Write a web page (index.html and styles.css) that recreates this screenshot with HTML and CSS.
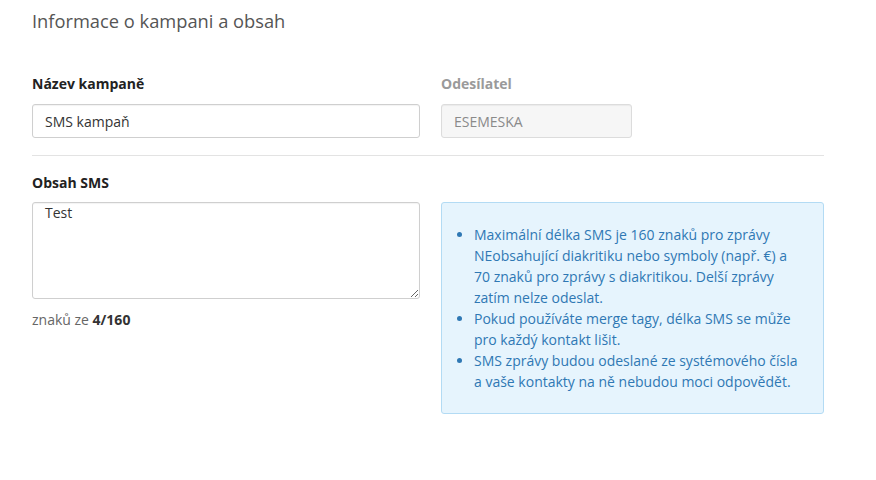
FILE: index.html
```html
<!DOCTYPE html>
<html lang="cs">
<head>
<meta charset="utf-8">
<title>Informace o kampani a obsah</title>
<link rel="stylesheet" href="styles.css">
</head>
<body>
<div class="page">
  <h2 class="title">Informace o kampani a obsah</h2>
  <div class="row">
    <div class="field">
      <label class="label" for="name">Název kampaně</label>
      <input id="name" class="input" type="text" value="SMS kampaň">
    </div>
    <div class="field">
      <label class="label label-muted" for="sender">Odesílatel</label>
      <input id="sender" class="input input-disabled" type="text" value="ESEMESKA" readonly>
    </div>
  </div>
  <hr class="divider">
  <div class="row">
    <div class="field">
      <label class="label label-sms" for="content">Obsah SMS</label>
      <textarea id="content" class="textarea">Test</textarea>
      <div class="counter">znaků ze <strong>4/160</strong></div>
    </div>
    <div class="info">
      <ul class="info-list">
        <li>Maximální délka SMS je 160 znaků pro zprávy NEobsahující diakritiku nebo symboly (např. €) a 70 znaků pro zprávy s diakritikou. Delší zprávy zatím nelze odeslat.</li>
        <li>Pokud používáte merge tagy, délka SMS se může pro každý kontakt lišit.</li>
        <li>SMS zprávy budou odeslané ze systémového čísla a vaše kontakty na ně nebudou moci odpovědět.</li>
      </ul>
    </div>
  </div>
</div>
</body>
</html>
```

FILE: styles.css
```css
* { box-sizing: border-box; }

html, body {
  margin: 0;
  padding: 0;
  background: #fff;
}

body {
  font-family: "Open Sans", "Liberation Sans", sans-serif;
  font-size: 14px;
  line-height: 18px;
  color: #333;
}

.page {
  width: 792px;
  margin-left: 32px;
  padding-top: 8px;
}

.title {
  margin: 0;
  font-size: 18.3px;
  line-height: 25px;
  font-weight: 400;
  color: #555;
}

.row {
  display: grid;
  grid-template-columns: 388px 383px;
  column-gap: 21px;
  margin-top: 42px;
}

.divider + .row {
  margin-top: 18px;
}

.field {
  display: flex;
  flex-direction: column;
  align-items: flex-start;
}

.label {
  display: block;
  font-weight: 700;
  color: #222;
  margin-bottom: 11px;
}

.label-sms {
  margin-bottom: 10px;
}

.label-muted {
  color: #9a9a9a;
}

.input {
  width: 100%;
  height: 34px;
  padding: 0 12px;
  border: 1px solid #cfcfcf;
  border-radius: 3px;
  box-shadow: inset 0 1px 1px rgba(0,0,0,0.05);
  font-family: inherit;
  font-size: 14px;
  color: #333;
  background: #fff;
  outline: none;
}

.input-disabled {
  width: 191px;
  background: #f6f6f6;
  color: #8a8a8a;
  border-color: #dcdcdc;
}

.divider {
  margin: 17px 0 0;
  border: 0;
  border-top: 1px solid #e3e3e3;
  height: 0;
}

.textarea {
  width: 100%;
  height: 97px;
  padding: 1px 12px;
  border: 1px solid #cfcfcf;
  border-radius: 3px;
  box-shadow: inset 0 1px 1px rgba(0,0,0,0.05);
  font-family: inherit;
  font-size: 14px;
  line-height: 18px;
  color: #333;
  resize: vertical;
  outline: none;
  display: block;
}

.counter {
  margin-top: 12px;
  color: #666;
}

.counter strong {
  color: #333;
}

.info {
  margin-top: 28px;
  height: 212px;
  background: #e6f4fd;
  border: 1px solid #b3dbf4;
  border-radius: 3px;
  padding: 21px 19px 0 15px;
  color: #2f78b4;
  line-height: 21px;
}

.info-list {
  margin: 0;
  padding-left: 17px;
}
```
